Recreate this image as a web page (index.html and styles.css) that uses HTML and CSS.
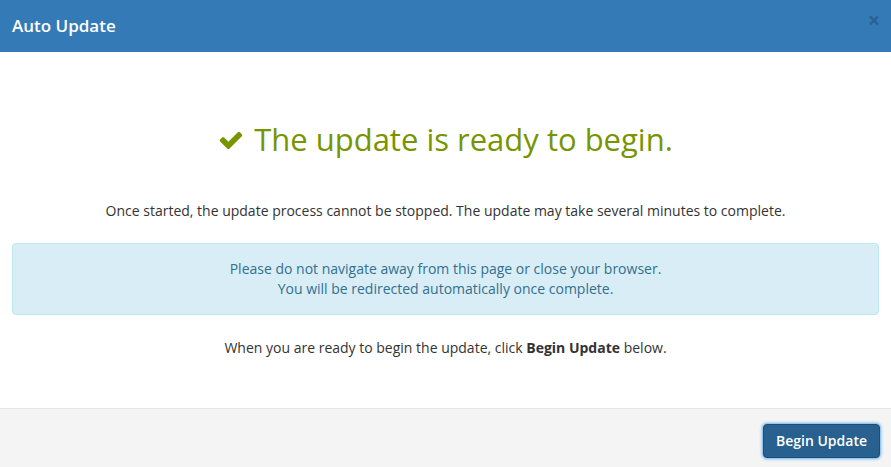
FILE: index.html
```html
<!DOCTYPE html>
<html>
<head>
<meta charset="utf-8">
<link rel="stylesheet" href="styles.css">
</head>
<body>
<div class="modal">
  <div class="modal-header">
    <h4 class="modal-title">Auto Update</h4>
    <span class="close">&times;</span>
  </div>
  <div class="modal-body">
    <h2 class="ready">
      <svg class="check" viewBox="0 0 1792 1792" width="26" height="26"><path fill="currentColor" d="M1671 566q0 40-28 68l-724 724-136 136q-28 28-68 28t-68-28l-136-136-362-362q-28-28-28-68t28-68l136-136q28-28 68-28t68 28l294 295 656-657q28-28 68-28t68 28l136 136q28 28 28 68z"/></svg>
      The update is ready to begin.
    </h2>
    <p class="intro">Once started, the update process cannot be stopped. The update may take several minutes to complete.</p>
    <div class="alert">
      Please do not navigate away from this page or close your browser.<br>
      You will be redirected automatically once complete.
    </div>
    <p class="outro">When you are ready to begin the update, click <strong>Begin Update</strong> below.</p>
  </div>
  <div class="modal-footer">
    <button class="btn">Begin Update</button>
  </div>
</div>
</body>
</html>
```
FILE: styles.css
```css
* { box-sizing: border-box; }
html, body { margin: 0; padding: 0; }
body {
  font-family: "Open Sans", "Liberation Sans", sans-serif;
  font-size: 14px;
  line-height: 1.42857;
  color: #333;
  background: #fff;
  width: 891px;
  height: 467px;
  overflow: hidden;
}
.modal { display: flex; flex-direction: column; height: 467px; }
.modal-header {
  background: #337ab7;
  height: 52px;
  display: flex;
  align-items: center;
  justify-content: space-between;
  padding: 0 11px 0 12px;
}
.modal-title {
  margin: 0;
  color: #fff;
  font-size: 17px;
  font-weight: 600;
  line-height: 1;
  padding-bottom: 2px;
}
.close {
  color: #000;
  opacity: 0.2;
  font-size: 21px;
  font-weight: bold;
  line-height: 1;
  padding-bottom: 12px;
}
.modal-body {
  flex: 1;
  padding: 65px 12px 0 12px;
  text-align: center;
}
.ready {
  margin: 0;
  color: #779500;
  font-size: 31px;
  font-weight: 400;
  line-height: 44px;
  display: flex;
  align-items: center;
  justify-content: center;
  gap: 10px;
}
.check { display: block; margin-top: 2px; }
.intro { margin: 40px 0 0 0; }
.alert {
  margin-top: 22px;
  background: #d9edf7;
  border: 1px solid #bce8f1;
  color: #31708f;
  border-radius: 4px;
  padding: 15px;
  line-height: 20px;
  height: 72px;
}
.outro { margin: 23px 0 0 0; }
.modal-footer {
  background: #f4f4f4;
  border-top: 1px solid #e5e5e5;
  height: 59px;
  display: flex;
  justify-content: flex-end;
  align-items: center;
  padding: 0 11px;
}
.btn {
  font-family: "Open Sans", "Liberation Sans", sans-serif;
  font-size: 14px;
  font-weight: 600;
  color: #fff;
  background: #286090;
  border: 1px solid #204d74;
  border-radius: 4px;
  padding: 6px 12px;
  line-height: 20px;
  box-shadow: 0 0 3px 1px #66afe9;
  margin-top: 6px;
}
```
